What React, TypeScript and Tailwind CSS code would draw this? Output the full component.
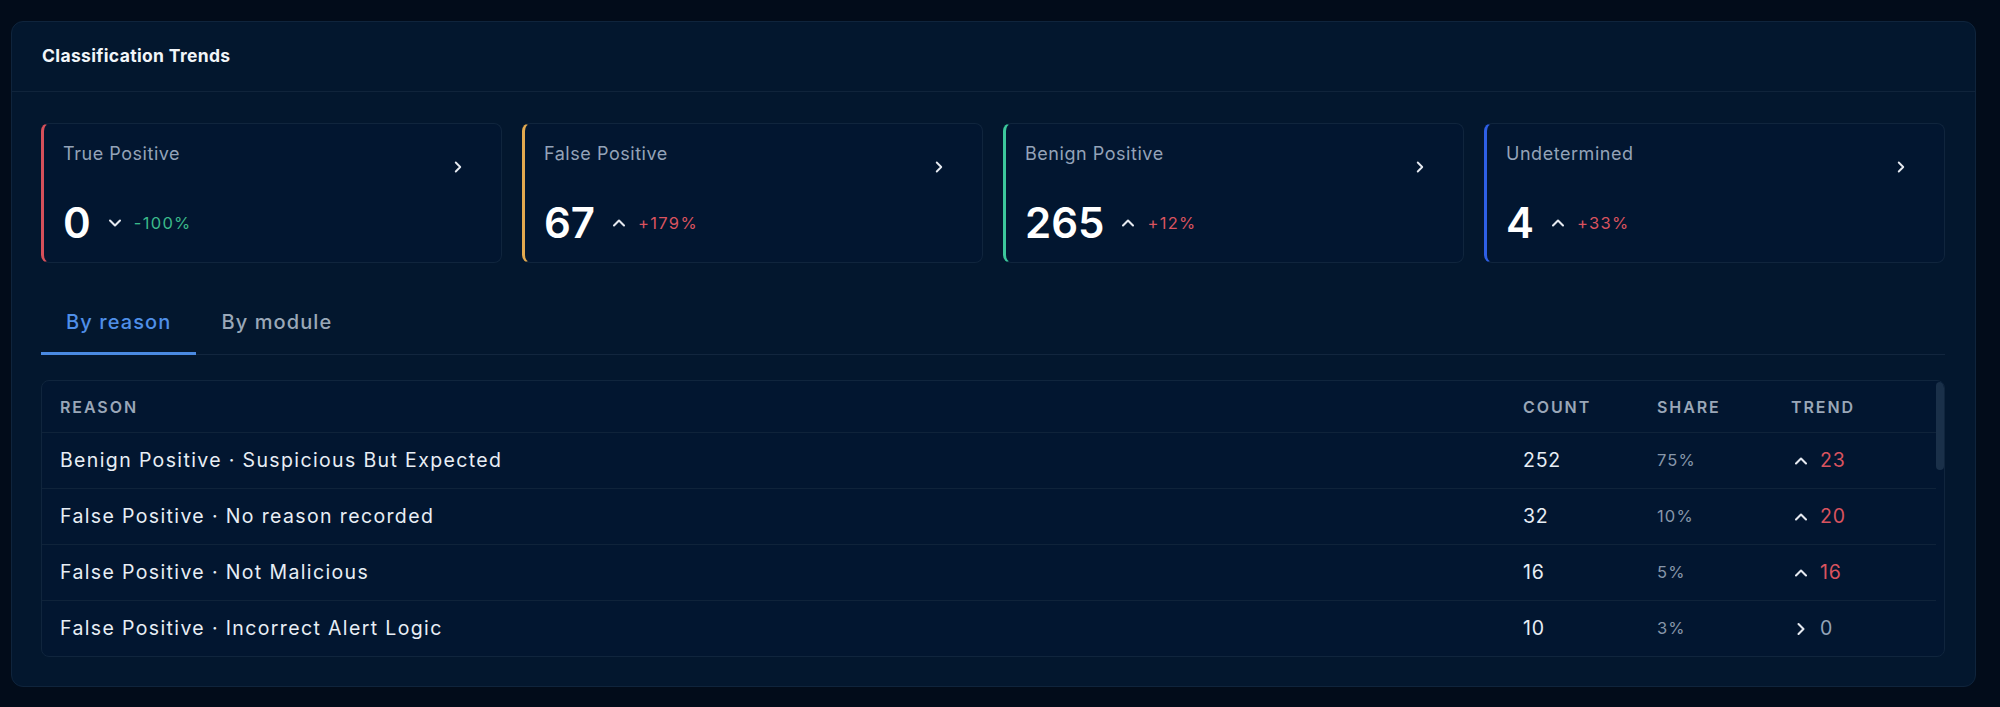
import React from "react";
import { ChevronRight, ChevronUp, ChevronDown } from "lucide-react";

type Card = {
  title: string;
  value: string;
  dir: "up" | "down";
  pct: string;
  accent: string;
  pctColor: string;
};

const cards: Card[] = [
  { title: "True Positive", value: "0", dir: "down", pct: "-100%", accent: "border-l-[#d6505a]", pctColor: "text-[#3bb98a]" },
  { title: "False Positive", value: "67", dir: "up", pct: "+179%", accent: "border-l-[#e2a94f]", pctColor: "text-[#d9535f]" },
  { title: "Benign Positive", value: "265", dir: "up", pct: "+12%", accent: "border-l-[#3cc79b]", pctColor: "text-[#d9535f]" },
  { title: "Undetermined", value: "4", dir: "up", pct: "+33%", accent: "border-l-[#2e5fe6]", pctColor: "text-[#d9535f]" },
];

type Row = { reason: string; count: string; share: string; dir: "up" | "flat"; trend: string };

const rows: Row[] = [
  { reason: "Benign Positive · Suspicious But Expected", count: "252", share: "75%", dir: "up", trend: "23" },
  { reason: "False Positive · No reason recorded", count: "32", share: "10%", dir: "up", trend: "20" },
  { reason: "False Positive · Not Malicious", count: "16", share: "5%", dir: "up", trend: "16" },
  { reason: "False Positive · Incorrect Alert Logic", count: "10", share: "3%", dir: "flat", trend: "0" },
];

function StatCard({ c }: { c: Card }) {
  return (
    <div
      className={`flex-1 min-w-0 h-[140px] rounded-[8px] border border-[#10253d] border-l-[3px] ${c.accent} bg-[#021630] pl-[19px] pr-[34px] pt-[17px]`}
    >
      <div className="flex items-start justify-between">
        <span className="text-[18px] leading-[26px] tracking-[0.03em] text-[#94a3b8]">{c.title}</span>
        <ChevronRight className="mt-[17px] shrink-0" size={18} strokeWidth={2.5} color="#e5e9f0" />
      </div>
      <div className="mt-[23px] flex items-center h-[48px]">
        <span className="text-[42px] leading-[48px] font-semibold text-white">{c.value}</span>
        {c.dir === "down" ? (
          <ChevronDown className="ml-[14px] shrink-0" size={20} strokeWidth={2.5} color="#e5e9f0" />
        ) : (
          <ChevronUp className="ml-[14px] shrink-0" size={20} strokeWidth={2.5} color="#e5e9f0" />
        )}
        <span className={`ml-[9px] text-[16.5px] tracking-[0.08em] ${c.pctColor}`}>{c.pct}</span>
      </div>
    </div>
  );
}

export default function App() {
  return (
    <div className="min-h-[707px] w-full bg-[#020c1a] pt-[21px] pl-[11px] font-[Inter,sans-serif]">
      <div className="w-[1965px] rounded-[12px] border border-[#0f243c] bg-[#03172e]">
        <div className="h-[70px] flex items-center px-[30px] border-b border-[#10243b]">
          <h2 className="text-[17.5px] font-bold text-[#f1f5f9] tracking-[0.02em]">Classification Trends</h2>
        </div>
        <div className="pl-[29px] pr-[30px] pt-[31px] pb-[29px]">
          <div className="flex gap-[20px]">
            {cards.map((c) => (
              <StatCard key={c.title} c={c} />
            ))}
          </div>

          <div className="mt-[28px] flex border-b border-[#12263e]">
            <button className="h-[64px] -mb-px border-b-[3px] border-[#4a8ae2] px-[25px] text-[20px] tracking-[0.055em] font-medium text-[#4f8fe8]">
              By reason
            </button>
            <button className="h-[64px] -mb-px border-b-[3px] border-transparent px-[25px] text-[20px] tracking-[0.055em] font-medium text-[#9aa8b8]">
              By module
            </button>
          </div>

          <div className="mt-[25px] flex rounded-[8px] border border-[#10253d] bg-[#021630] overflow-hidden">
            <div className="flex-1 min-w-0">
              <div className="grid grid-cols-[1fr_134px_134px_145px] pl-[18px] h-[52px] items-center border-b border-[#0f233a] text-[16px] font-semibold tracking-[0.12em] text-[#9aa7b8]">
                <span>REASON</span>
                <span>COUNT</span>
                <span>SHARE</span>
                <span>TREND</span>
              </div>
              {rows.map((r, i) => (
                <div
                  key={r.reason}
                  className={`grid grid-cols-[1fr_134px_134px_145px] pl-[18px] items-center ${
                    i < rows.length - 1 ? "h-[56px] border-b border-[#0f233a]" : "h-[55px]"
                  }`}
                >
                  <span className="text-[19.5px] tracking-[0.07em] text-[#e8eef5]">{r.reason}</span>
                  <span className="text-[19.5px] tracking-[0.04em] text-[#e8eef5]">{r.count}</span>
                  <span className="text-[16.5px] tracking-[0.07em] text-[#8796aa]">{r.share}</span>
                  <span className="flex items-center">
                    {r.dir === "up" ? (
                      <ChevronUp size={20} strokeWidth={2.5} color="#e5e9f0" />
                    ) : (
                      <ChevronRight size={20} strokeWidth={2.5} color="#e5e9f0" />
                    )}
                    <span
                      className={`ml-[9px] text-[19.5px] tracking-[0.04em] ${
                        r.dir === "up" ? "text-[#d9535f]" : "text-[#94a3b8]"
                      }`}
                    >
                      {r.trend}
                    </span>
                  </span>
                </div>
              ))}
            </div>
            <div className="w-[8px] shrink-0">
              <div className="mt-[1px] h-[88px] rounded-full bg-[#1a3049]" />
            </div>
          </div>
        </div>
      </div>
    </div>
  );
}
